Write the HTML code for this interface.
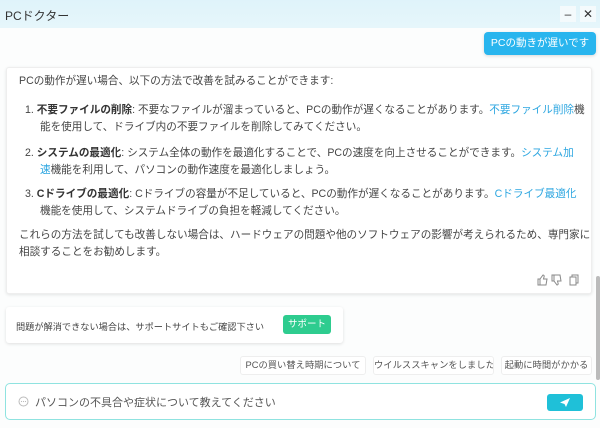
<!DOCTYPE html>
<html><head><meta charset="utf-8"><style>
*{margin:0;padding:0;box-sizing:border-box}
body{width:600px;height:428px;overflow:hidden;background:#fcfdfd;font-family:"Liberation Sans","Noto Sans CJK JP",sans-serif;color:#444;position:relative}
.tb{position:absolute;left:0;top:0;width:600px;height:28px;background:linear-gradient(#dff3fa,#e6f6fb);font-size:12px;color:#333}
.tb .t{position:absolute;left:5px;top:7px}
.tb .b{position:absolute;top:6px;width:16px;height:16px;background:#f4fafc;text-align:center;font-size:12px;line-height:16px;color:#333}
.btn{position:absolute;left:484px;top:32px;width:112px;height:23px;background:#29b5ee;border-radius:4px;color:#fff;font-size:10.5px;text-align:center;line-height:23px;box-shadow:0 1px 3px rgba(0,0,0,.15);white-space:nowrap}
.card{position:absolute;left:6px;top:67px;width:586px;height:227px;background:#fff;border:1px solid #eee;border-radius:3px;box-shadow:0 1px 3px rgba(0,0,0,.1);font-size:10.6px;line-height:17px}
.card p{position:absolute;left:12px;white-space:nowrap}
a{color:#2ca6e0;text-decoration:none}
b{color:#333}
.sup{position:absolute;left:6px;top:307px;width:337px;height:36px;background:#fff;border-radius:3px;box-shadow:0 1px 3px rgba(0,0,0,.12);font-size:9.2px;white-space:nowrap}
.sup span{position:absolute;left:10px;top:12px}
.sup i{position:absolute;left:277px;top:8px;width:48px;height:19px;background:#2ecc8f;color:#fff;font-style:normal;border-radius:3px;text-align:center;line-height:19px;font-size:9.5px}
.chip{position:absolute;top:356px;height:19px;background:#fff;border:1px solid #eee;border-radius:3px;font-size:9.3px;color:#555;line-height:17px;text-align:center;white-space:nowrap;overflow:hidden}
.inp{position:absolute;left:5px;top:383px;width:591px;height:37px;background:#fff;border:1px solid #8fe3e0;border-radius:5px;font-size:11px;color:#555;white-space:nowrap}
.send{position:absolute;left:541px;top:10px;width:36px;height:17px;background:#1fc0d8;border-radius:3px}
.sb{position:absolute;left:596px;top:276px;width:4px;height:104px;background:#bbb;border-radius:2px}
</style></head><body>
<div class="tb"><span class="t">PCドクター</span><span class="b" style="left:560px">–</span><span class="b" style="left:580px">✕</span></div>
<div class="btn">PCの動きが遅いです</div>
<div class="card">
<p style="top:5px">PCの動作が遅い場合、以下の方法で改善を試みることができます:</p>
<p style="top:34px;left:18px">1. <b>不要ファイルの削除</b>: 不要なファイルが溜まっていると、PCの動作が遅くなることがあります。<a>不要ファイル削除</a>機</p>
<p style="top:51px;left:33px">能を使用して、ドライブ内の不要ファイルを削除してみてください。</p>
<p style="top:77px;left:18px">2. <b>システムの最適化</b>: システム全体の動作を最適化することで、PCの速度を向上させることができます。<a>システム加</a></p>
<p style="top:94px;left:33px"><a>速</a>機能を利用して、パソコンの動作速度を最適化しましょう。</p>
<p style="top:118px;left:18px">3. <b>Cドライブの最適化</b>: Cドライブの容量が不足していると、PCの動作が遅くなることがあります。<a>Cドライブ最適化</a></p>
<p style="top:135px;left:33px">機能を使用して、システムドライブの負担を軽減してください。</p>
<p style="top:159px">これらの方法を試しても改善しない場合は、ハードウェアの問題や他のソフトウェアの影響が考えられるため、専門家に</p>
<p style="top:176px">相談することをお勧めします。</p>
<svg style="position:absolute;left:530px;top:206px" width="44" height="12" viewBox="0 0 44 12" fill="none" stroke="#888" stroke-width="1">
<path d="M1 5h2v6H1zM3 5l3-4c1 0 1.5 1 1 2l-.5 2H10l-1 6H3"/>
<path d="M15 7h2V1h-2zM17 7l3 4c1 0 1.5-1 1-2l-.5-2H24l-1-6h-6"/>
<rect x="33" y="3" width="6" height="8"/><path d="M35 3V1h6v8h-2"/>
</svg>
</div>
<div class="sup"><span>問題が解消できない場合は、サポートサイトもご確認下さい</span><i>サポート</i></div>
<div class="chip" style="left:240px;width:126px">PCの買い替え時期について</div>
<div class="chip" style="left:373px;width:121px">ウイルススキャンをしました</div>
<div class="chip" style="left:501px;width:91px">起動に時間がかかる</div>
<div class="inp"><svg style="position:absolute;left:12px;top:12px" width="11" height="11" viewBox="0 0 11 11"><circle cx="5.5" cy="5.5" r="4.5" fill="none" stroke="#bbb"/><circle cx="3.5" cy="5.5" r=".6" fill="#bbb"/><circle cx="5.5" cy="5.5" r=".6" fill="#bbb"/><circle cx="7.5" cy="5.5" r=".6" fill="#bbb"/></svg><span style="position:absolute;left:29px;top:10px">パソコンの不具合や症状について教えてください</span>
<div class="send"><svg width="36" height="17" viewBox="0 0 36 17"><path d="M13 8.5 L23 4 L19 13 L17.5 10 Z" fill="#fff"/></svg></div></div>
<div class="sb"></div>
</body></html>
